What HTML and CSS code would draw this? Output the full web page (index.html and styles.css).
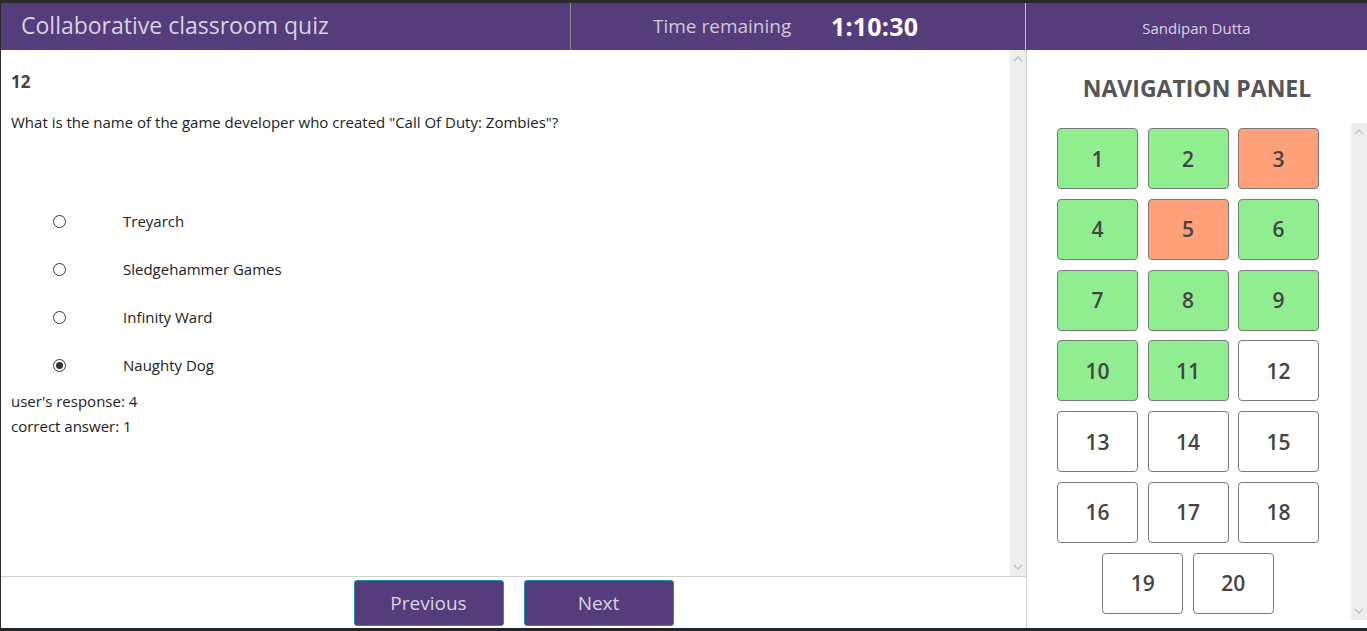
FILE: index.html
```html
<!DOCTYPE html>
<html lang="en">
<head>
<meta charset="utf-8">
<title>Collaborative classroom quiz</title>
<link rel="stylesheet" href="styles.css">
</head>
<body>
<div class="app">
  <header class="topbar">
    <div class="brand">Collaborative classroom quiz</div>
    <div class="timer"><span class="timer-label">Time remaining</span><span class="timer-value">1:10:30</span></div>
    <div class="user">Sandipan Dutta</div>
  </header>
  <div class="main">
    <section class="quiz">
      <div class="quiz-scroll">
        <div class="quiz-content">
          <div class="qnum">12</div>
          <p class="qtext">What is the name of the game developer who created "Call Of Duty: Zombies"?</p>
          <ul class="options">
            <li class="option"><span class="radio"></span><span class="opt-label">Treyarch</span></li>
            <li class="option"><span class="radio"></span><span class="opt-label">Sledgehammer Games</span></li>
            <li class="option"><span class="radio"></span><span class="opt-label">Infinity Ward</span></li>
            <li class="option"><span class="radio checked"></span><span class="opt-label">Naughty Dog</span></li>
          </ul>
          <div class="result">user's response: 4</div>
          <div class="result">correct answer: 1</div>
        </div>
        <div class="vscroll">
          <svg class="arrow" viewBox="0 0 10 6" width="10" height="6"><path d="M1 5 L5 1 L9 5" fill="none" stroke="#c4c4c4" stroke-width="1.6"/></svg>
          <svg class="arrow" viewBox="0 0 10 6" width="10" height="6"><path d="M1 1 L5 5 L9 1" fill="none" stroke="#c4c4c4" stroke-width="1.6"/></svg>
        </div>
      </div>
      <div class="quiz-footer">
        <button class="nav-btn">Previous</button>
        <button class="nav-btn">Next</button>
      </div>
    </section>
    <aside class="panel">
      <h2 class="panel-title">NAVIGATION PANEL</h2>
      <div class="panel-scroll">
        <div class="grid">
          <div class="cell ok">1</div>
          <div class="cell ok">2</div>
          <div class="cell bad">3</div>
          <div class="cell ok">4</div>
          <div class="cell bad">5</div>
          <div class="cell ok">6</div>
          <div class="cell ok">7</div>
          <div class="cell ok">8</div>
          <div class="cell ok">9</div>
          <div class="cell ok">10</div>
          <div class="cell ok">11</div>
          <div class="cell">12</div>
          <div class="cell">13</div>
          <div class="cell">14</div>
          <div class="cell">15</div>
          <div class="cell">16</div>
          <div class="cell">17</div>
          <div class="cell">18</div>
          <div class="cell">19</div>
          <div class="cell">20</div>
        </div>
        <div class="vscroll">
          <svg class="arrow" viewBox="0 0 10 6" width="10" height="6"><path d="M1 5 L5 1 L9 5" fill="none" stroke="#c4c4c4" stroke-width="1.6"/></svg>
          <svg class="arrow" viewBox="0 0 10 6" width="10" height="6"><path d="M1 1 L5 5 L9 1" fill="none" stroke="#c4c4c4" stroke-width="1.6"/></svg>
        </div>
      </div>
    </aside>
  </div>
</div>
</body>
</html>
```
FILE: styles.css
```css
* { box-sizing: border-box; }
html, body { margin: 0; padding: 0; }
body {
  font-family: "Open Sans", "Noto Sans", "Liberation Sans", sans-serif;
  color: #222;
  background: #fff;
}
.app {
  height: 631px;
  display: flex;
  flex-direction: column;
  border-top: 3px solid #2b2b2b;
  border-left: 1px solid #2b2b2b;
  border-bottom: 3px solid #1c262b;
}
.topbar {
  height: 47px;
  flex: none;
  background: #553c7b;
  display: grid;
  grid-template-columns: 570px 455px 1fr;
}
.brand {
  color: #d8d3e0;
  font-size: 23px;
  padding-left: 20px;
  display: flex;
  align-items: center;
  padding-bottom: 4px;
  border-right: 1px solid #8a8a8a;
}
.timer {
  display: flex;
  align-items: center;
  padding-left: 82px;
  padding-bottom: 1px;
  border-right: 1px solid #bcbcbc;
}
.timer-label {
  color: #d0cad9;
  font-size: 19px;
  width: 178px;
}
.timer-value {
  color: #fff;
  font-weight: 700;
  font-size: 25px;
  letter-spacing: 0.2px;
}
.user {
  color: #d8d3e0;
  font-size: 15px;
  display: flex;
  align-items: center;
  justify-content: center;
  padding-top: 2px;
}
.main {
  flex: 1;
  display: flex;
  min-height: 0;
}
.quiz {
  width: 1026px;
  flex: none;
  display: flex;
  flex-direction: column;
  border-right: 1px solid #cfcfcf;
}
.quiz-scroll {
  flex: 1;
  display: flex;
  min-height: 0;
  border-bottom: 1px solid #d0d0d0;
}
.quiz-content {
  flex: 1;
  padding: 20px 10px 0 10px;
}
.qnum {
  font-weight: 700;
  font-size: 17px;
  color: #444;
  line-height: 24px;
}
.qtext {
  margin: 17px 0 0;
  font-size: 15px;
  line-height: 22px;
}
.options {
  list-style: none;
  margin: 64px 0 0;
  padding: 0;
}
.option {
  height: 48px;
  display: flex;
  align-items: center;
  font-size: 15px;
}
.radio {
  width: 13px;
  height: 13px;
  border: 1px solid #333;
  border-radius: 50%;
  margin-left: 42px;
  margin-right: 57px;
  flex: none;
  display: flex;
  align-items: center;
  justify-content: center;
}
.radio.checked::after {
  content: "";
  width: 7px;
  height: 7px;
  border-radius: 50%;
  background: #333;
}
.result {
  font-size: 15px;
  line-height: 25px;
}
.vscroll {
  width: 16px;
  flex: none;
  background: #eeeeee;
  display: flex;
  flex-direction: column;
  justify-content: space-between;
  align-items: center;
  padding: 6px 0 6px;
}
.quiz-footer {
  height: 51px;
  flex: none;
  display: flex;
  justify-content: center;
  align-items: center;
  gap: 20px;
}
.nav-btn {
  width: 150px;
  height: 46px;
  background: #553c7b;
  color: #d8d3e0;
  border: 1px solid #1c8fb0;
  border-radius: 3px;
  font-family: inherit;
  font-size: 19px;
  padding: 0;
}
.panel {
  flex: 1;
  display: flex;
  flex-direction: column;
  min-width: 0;
}
.panel-title {
  margin: 0;
  height: 73px;
  padding-top: 21px;
  text-align: center;
  font-size: 23px;
  font-weight: 700;
  color: #555;
  line-height: 34px;
}
.panel-scroll {
  height: 497px;
  display: flex;
}
.grid {
  flex: 1;
  display: flex;
  flex-wrap: wrap;
  justify-content: center;
  align-content: flex-start;
  gap: 9.75px 9.5px;
  padding: 5px 32px 0 30px;
}
.cell {
  width: 81px;
  height: 61px;
  border: 1px solid #7a7a7a;
  border-radius: 4px;
  display: flex;
  align-items: center;
  justify-content: center;
  font-size: 21px;
  font-weight: 600;
  color: #444;
  background: #fff;
}
.cell.ok { background: #90ee90; }
.cell.bad { background: #ffa07a; }
```
